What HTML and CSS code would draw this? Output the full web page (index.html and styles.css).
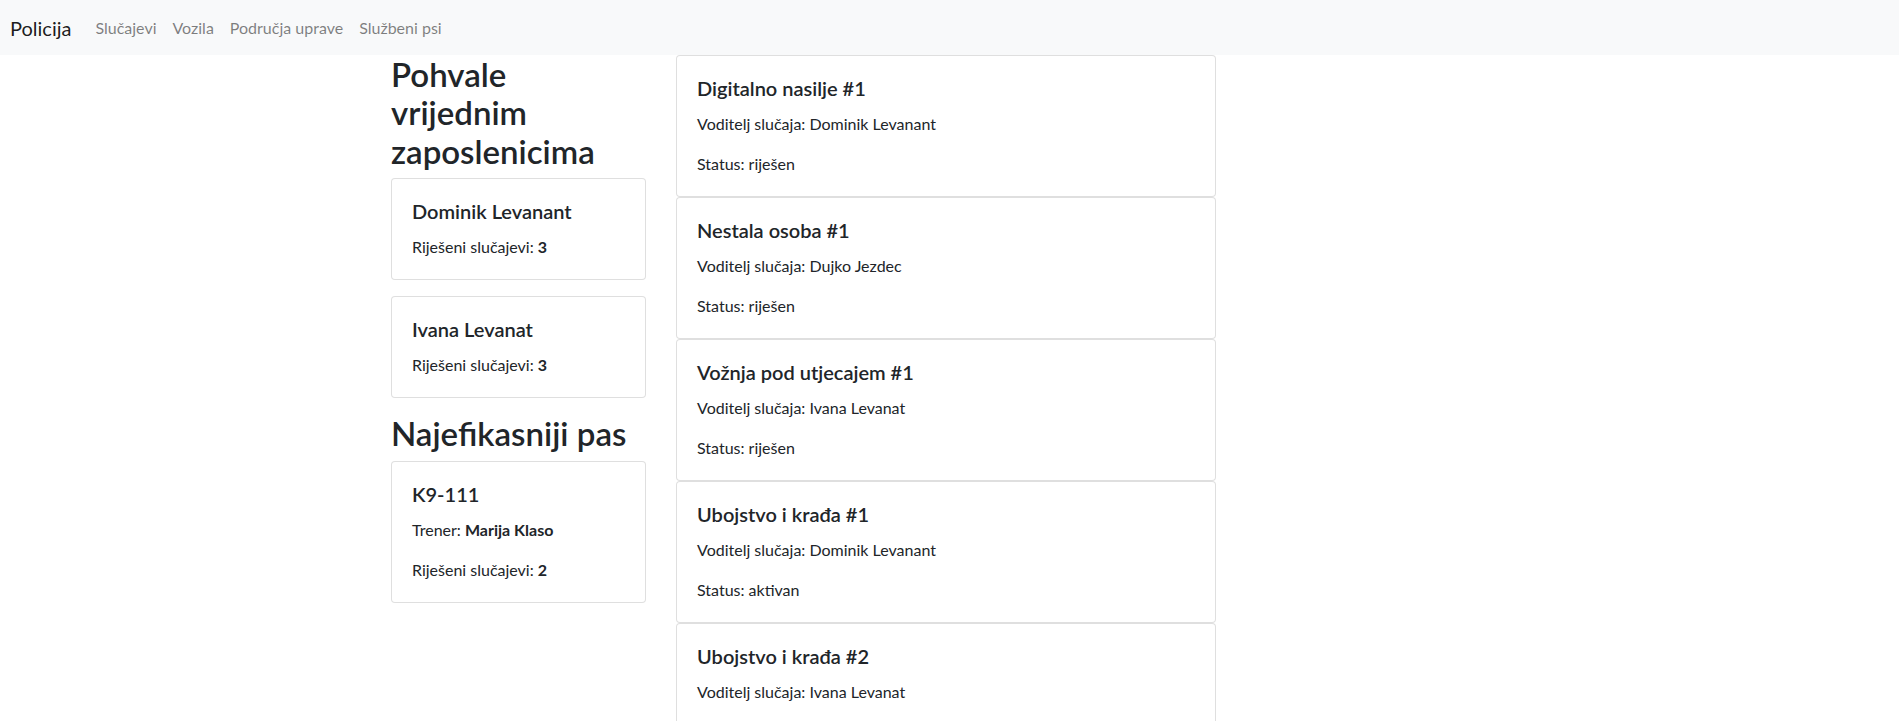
FILE: index.html
```html
<!DOCTYPE html>
<html lang="hr">
<head>
<meta charset="utf-8">
<title>Policija</title>
<link rel="stylesheet" href="styles.css">
</head>
<body>
<nav class="navbar">
  <a class="brand" href="#">Policija</a>
  <ul class="nav">
    <li><a class="nav-link" href="#">Slučajevi</a></li>
    <li><a class="nav-link" href="#">Vozila</a></li>
    <li><a class="nav-link" href="#">Područja uprave</a></li>
    <li><a class="nav-link" href="#">Službeni psi</a></li>
  </ul>
</nav>
<main class="page">
  <aside class="side">
    <h2 class="heading heading-narrow">Pohvale vrijednim zaposlenicima</h2>
    <div class="card card-spaced">
      <div class="card-body">
        <h5 class="card-title">Dominik Levanant</h5>
        <p class="card-text">Riješeni slučajevi: <b>3</b></p>
      </div>
    </div>
    <div class="card card-spaced">
      <div class="card-body">
        <h5 class="card-title">Ivana Levanat</h5>
        <p class="card-text">Riješeni slučajevi: <b>3</b></p>
      </div>
    </div>
    <h2 class="heading">Najefikasniji pas</h2>
    <div class="card">
      <div class="card-body">
        <h5 class="card-title">K9-111</h5>
        <p class="card-text">Trener: <b>Marija Klaso</b></p>
        <p class="card-text">Riješeni slučajevi: <b>2</b></p>
      </div>
    </div>
  </aside>
  <section class="cases">
    <div class="card">
      <div class="card-body">
        <h5 class="card-title">Digitalno nasilje #1</h5>
        <p class="card-text">Voditelj slučaja: Dominik Levanant</p>
        <p class="card-text">Status: riješen</p>
      </div>
    </div>
    <div class="card">
      <div class="card-body">
        <h5 class="card-title">Nestala osoba #1</h5>
        <p class="card-text">Voditelj slučaja: Dujko Jezdec</p>
        <p class="card-text">Status: riješen</p>
      </div>
    </div>
    <div class="card">
      <div class="card-body">
        <h5 class="card-title">Vožnja pod utjecajem #1</h5>
        <p class="card-text">Voditelj slučaja: Ivana Levanat</p>
        <p class="card-text">Status: riješen</p>
      </div>
    </div>
    <div class="card">
      <div class="card-body">
        <h5 class="card-title">Ubojstvo i krađa #1</h5>
        <p class="card-text">Voditelj slučaja: Dominik Levanant</p>
        <p class="card-text">Status: aktivan</p>
      </div>
    </div>
    <div class="card">
      <div class="card-body">
        <h5 class="card-title">Ubojstvo i krađa #2</h5>
        <p class="card-text">Voditelj slučaja: Ivana Levanat</p>
        <p class="card-text">Status: aktivan</p>
      </div>
    </div>
  </section>
</main>
</body>
</html>
```
FILE: styles.css
```css
* { box-sizing: border-box; }

html, body {
  margin: 0;
  padding: 0;
}

body {
  font-family: Lato, "Noto Sans", sans-serif;
  font-size: 16px;
  line-height: 1.5;
  color: #212529;
  background: #fff;
}

/* Navbar */
.navbar {
  display: flex;
  align-items: center;
  height: 55px;
  padding: 0 10px;
  background: #f8f9fa;
}

.brand {
  font-size: 20px;
  line-height: 30px;
  color: rgba(0, 0, 0, 0.9);
  text-decoration: none;
  margin-right: 16px;
}

.nav {
  display: flex;
  list-style: none;
  margin: 0;
  padding: 0;
}

.nav-link {
  display: block;
  padding: 0 8px;
  line-height: 24px;
  color: rgba(0, 0, 0, 0.5);
  text-decoration: none;
}

/* Layout */
.page {
  display: flex;
  align-items: flex-start;
  margin-left: 376px;
}

.side {
  width: 285px;
  padding: 0 15px;
}

.cases {
  width: 570px;
  padding: 0 15px;
}

.heading {
  margin: 0 0 8px;
  font-size: 33px;
  font-weight: 600;
  line-height: 38.4px;
}

.heading-narrow {
  max-width: 215px;
}

/* Cards */
.card {
  background: #fff;
  border: 1px solid rgba(0, 0, 0, 0.125);
  border-radius: 4px;
}

.card-spaced {
  margin-bottom: 16px;
}

.card-body {
  padding: 20px;
}

.card-title {
  margin: 0 0 12px;
  font-size: 20px;
  font-weight: 600;
  line-height: 24px;
}

.card-text {
  margin: 0 0 16px;
}

.card-text:last-child {
  margin-bottom: 0;
}

.card-text b {
  font-weight: 700;
}
```
